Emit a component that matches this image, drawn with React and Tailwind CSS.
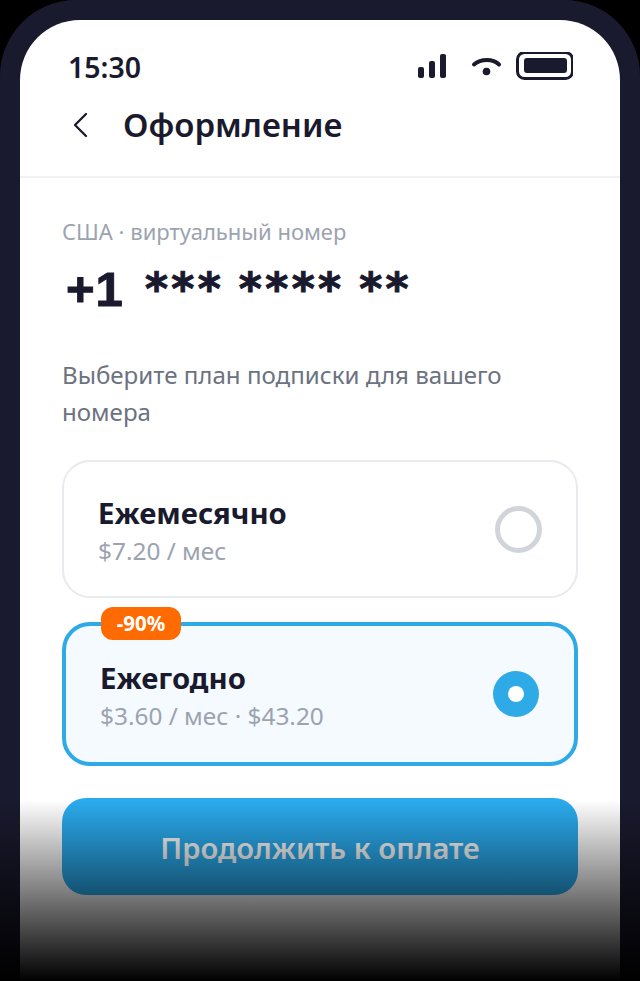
export default function App() {
  return (
    <div className="relative h-[981px] w-[640px] overflow-hidden bg-black font-['Noto_Sans',sans-serif] text-[#1a1a2e]">
      <div className="h-full rounded-t-[76px] bg-[#1a1a2e] px-5 pt-5">
        <div className="h-full rounded-t-[60px] bg-white">
          {/* status bar */}
          <div className="flex h-[94px] items-start justify-between pl-12 pr-[47px] pt-[27px]">
            <div className="text-[28.5px] font-semibold leading-10">15:30</div>
            <div className="flex items-center pt-[5px]">
              <svg width="155" height="30" viewBox="0 0 155 30" fill="#1a1a2e">
                <rect x="0" y="15" width="6" height="11" rx="2" />
                <rect x="11" y="9" width="6" height="17" rx="2" />
                <rect x="22" y="2" width="6" height="24" rx="2" />
                <path d="M56 12.5C63 6.5 75 6.5 81 12.5" fill="none" stroke="#1a1a2e" strokeWidth="4" strokeLinecap="round" />
                <circle cx="68.5" cy="19.5" r="3.8" />
                <rect x="99.5" y="0.5" width="55" height="26" rx="7" fill="none" stroke="#1a1a2e" strokeWidth="3" />
                <rect x="106" y="6" width="43" height="15" rx="3" />
              </svg>
            </div>
          </div>

          {/* header */}
          <div className="flex h-[64px] items-start border-b-2 border-[#f1f2f4] pl-[52px]">
            <svg width="16" height="26" viewBox="0 0 16 26" fill="none" className="mt-[-2px]">
              <path d="M14 2L3 13L14 24" stroke="#1a1a2e" strokeWidth="2.3" strokeLinecap="round" strokeLinejoin="round" />
            </svg>
            <h1 className="ml-[35px] mt-[-11px] text-[33px] font-semibold leading-[44px]">Оформление</h1>
          </div>

          <div className="px-[42px] pt-[37px]">
            <div className="text-[22px] leading-[32px] text-[#9ca3af]">США · виртуальный номер</div>
            <div className="mt-[14px] flex h-[56px] items-start pl-[4px] font-['Liberation_Sans',sans-serif] text-[49px] font-bold leading-[56px] tracking-[1px] [-webkit-text-stroke:1px_#1a1a2e]">
              <span>+1</span>
              <span className="ml-[21px] whitespace-pre font-['DejaVu_Sans',sans-serif] text-[44px] tracking-[3.4px] [word-spacing:-4px]">*** **** **</span>
            </div>
            <p className="mt-[40px] w-[460px] text-[24.1px] leading-[36.5px] text-[#6b7280]">
              Выберите план подписки для вашего номера
            </p>

            {/* plans */}
            <div className="mt-[30px] flex h-[138px] items-center justify-between rounded-[28px] border-2 border-[#e8eaed] bg-white pl-[34px] pr-[34px]">
              <div className="pt-[3px]">
                <div className="text-[29.3px] font-bold leading-[40px]">Ежемесячно</div>
                <div className="text-[24.4px] leading-[36px] text-[#9ca3af]">$7.20 / мес</div>
              </div>
              <div className="h-[47px] w-[47px] rounded-full border-[5px] border-[#d1d5db]" />
            </div>

            <div className="relative mt-[24px] flex h-[144px] items-center justify-between rounded-[28px] border-4 border-[#2eaae6] bg-[#f5faff] pl-[34px] pr-[35px]">
              <div className="absolute left-[35px] top-[-19px] flex h-[33px] w-[80px] items-center justify-center rounded-[12px] bg-[#ff6b00] text-[20.5px] font-bold text-white">
                -90%
              </div>
              <div className="pt-[3px]">
                <div className="text-[29.3px] font-bold leading-[40px]">Ежегодно</div>
                <div className="text-[24.4px] leading-[36px] text-[#9ca3af]">$3.60 / мес · $43.20</div>
              </div>
              <div className="flex h-[46px] w-[46px] items-center justify-center rounded-full bg-[#2eaae6]">
                <div className="h-[16px] w-[16px] rounded-full bg-white" />
              </div>
            </div>

            <button type="button" className="mt-[32px] h-[97px] w-full rounded-[24px] bg-[#2aabee] pt-[4px] text-[29.2px] font-semibold text-white">
              Продолжить к оплате
            </button>
          </div>
        </div>
      </div>

      {/* fade to black over the bottom */}
      <div className="pointer-events-none absolute bottom-0 left-0 h-[181px] w-full bg-gradient-to-b from-transparent to-black" />
    </div>
  );
}
